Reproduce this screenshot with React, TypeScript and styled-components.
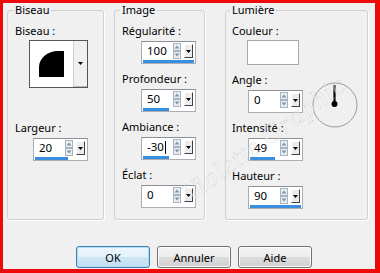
import React from "react";
import styled, { createGlobalStyle } from "styled-components";

const GlobalStyle = createGlobalStyle`
  html, body {
    margin: 0;
    padding: 0;
    background: #f0f0f0;
  }
  body {
    font-family: "Noto Sans", "Liberation Sans", sans-serif;
    font-size: 11px;
    color: #000;
  }
`;

const Window = styled.div`
  position: relative;
  width: 380px;
  height: 273px;
  box-sizing: border-box;
  border-style: solid;
  border-color: #ee0a0a;
  border-width: 3px 5px 4px 3px;
  background: #f0f0f0;
  overflow: hidden;
`;

const Groups = styled.div`
  display: flex;
  align-items: flex-start;
  padding-left: 4px;
`;

const Group = styled.fieldset<{ $w: number; $ml?: number; $pl: number }>`
  box-sizing: border-box;
  width: ${(p) => p.$w}px;
  height: 217px;
  min-width: 0;
  margin: 0 0 0 ${(p) => p.$ml ?? 0}px;
  padding: 7px 0 0 ${(p) => p.$pl}px;
  border: 1px solid #d0d0d0;
  border-radius: 3px;
  box-shadow: 1px 1px 0 #ffffff;
`;

const Legend = styled.legend`
  padding: 0 2px;
  margin-left: -2px;
  line-height: 14px;
`;

const Stack = styled.div`
  display: flex;
  flex-direction: column;
  gap: 8px;
`;

const Field = styled.div`
  display: flex;
  flex-direction: column;
  align-items: flex-start;
`;

const Label = styled.div`
  line-height: 14px;
  white-space: nowrap;
`;

const BevelPicker = styled.div`
  display: flex;
  width: 59px;
  height: 48px;
  margin: 2px 0 33px 14px;
  box-sizing: border-box;
  border: 1px solid #555;
  background: #fff;
`;

const BevelArt = styled.div`
  width: 43px;
  height: 46px;
`;

const PickerButton = styled.div`
  flex: 1;
  display: flex;
  align-items: center;
  justify-content: center;
  background: #f0f0f0;
  border-left: 1px solid #d0d0d0;
  border-bottom: 1px solid #b8b8b8;
`;

const SpinBox = styled.div<{ $indent: number }>`
  display: flex;
  flex-direction: column;
  width: 55px;
  height: 23px;
  margin: 3px 0 0 ${(p) => p.$indent}px;
  box-sizing: border-box;
  border: 1px solid #abadb3;
  border-top-color: #8f9095;
  background: #fff;
`;

const SpinRow = styled.div`
  display: flex;
  align-items: center;
  height: 18px;
`;

const Value = styled.span`
  flex: 1;
  display: flex;
  align-items: center;
  padding-left: 5px;
  font-size: 11.5px;
  line-height: 18px;
`;

const Caret = styled.span`
  display: inline-block;
  width: 1px;
  height: 13px;
  margin-left: 1px;
  background: #000;
`;

const DropButton = styled.div`
  display: flex;
  align-items: center;
  justify-content: center;
  width: 9px;
  height: 14px;
  margin: 0 2px 0 3px;
  box-sizing: border-box;
  border: 1px solid;
  border-color: #ffffff #404040 #404040 #ffffff;
  background: #ececec;
`;

const Bar = styled.div`
  height: 3px;
  margin-left: 1px;
  background: #3b8de0;
`;

const Swatch = styled.div`
  width: 52px;
  height: 25px;
  margin: 2px 0 0 15px;
  box-sizing: border-box;
  border: 1px solid #a8a8a8;
  background: #fff;
`;

const AngleRow = styled.div`
  display: flex;
  align-items: flex-start;
  height: 40px;
`;

const Dial = styled.svg`
  flex: none;
  margin: 9px 0 0 9px;
`;

const Buttons = styled.div`
  display: flex;
  gap: 7px;
  margin-top: 26px;
  padding-left: 73px;
`;

const Button = styled.button<{ $default?: boolean }>`
  width: 74px;
  height: 22px;
  box-sizing: border-box;
  padding: 0;
  font: inherit;
  color: #000;
  border: 1px solid ${(p) => (p.$default ? "#3c7fb1" : "#707070")};
  border-radius: 3px;
  background: ${(p) =>
    p.$default
      ? "linear-gradient(#eef7fc 0%, #e2f1fa 50%, #cfe7f5 50%, #c0dff1 100%)"
      : "linear-gradient(#f4f4f4 0%, #ececec 50%, #dddddd 50%, #d0d0d0 100%)"};
  box-shadow: inset 0 0 0 1px ${(p) => (p.$default ? "#b5dcf3" : "#fbfbfb")};
`;

const Watermark = styled.div`
  position: absolute;
  left: 182px;
  top: 178px;
  transform: rotate(-36deg);
  transform-origin: left center;
  font-family: "Liberation Serif", serif;
  font-style: italic;
  font-size: 27px;
  letter-spacing: 1px;
  color: rgba(255, 255, 255, 0.45);
  -webkit-text-stroke: 0.5px rgba(140, 140, 140, 0.32);
  white-space: nowrap;
  pointer-events: none;
`;

const DownTriangle = () => (
  <svg width="5" height="3" viewBox="0 0 5 3">
    <path d="M0 0 H5 L2.5 3 Z" fill="#000" />
  </svg>
);

const SpinArrows = () => (
  <svg width="8" height="16" viewBox="0 0 8 16">
    <rect x="0.5" y="0.5" width="7" height="7" fill="#e8edf2" stroke="#a9b4bf" />
    <rect x="0.5" y="8.5" width="7" height="7" fill="#e8edf2" stroke="#a9b4bf" />
    <path d="M4 2.5 L6.5 5.5 H1.5 Z" fill="#7b95b0" />
    <path d="M1.5 10.5 H6.5 L4 13.5 Z" fill="#7b95b0" />
  </svg>
);

type SpinnerProps = { value: string; bar: number; indent: number; caret?: boolean };

const Spinner = ({ value, bar, indent, caret }: SpinnerProps) => (
  <SpinBox $indent={indent}>
    <SpinRow>
      <Value>
        {value}
        {caret && <Caret />}
      </Value>
      <SpinArrows />
      <DropButton>
        <DownTriangle />
      </DropButton>
    </SpinRow>
    <Bar style={{ width: bar }} />
  </SpinBox>
);

const App = () => {
  return (
    <>
      <GlobalStyle />
      <Window>
        <Groups>
          <Group $w={97} $pl={7}>
            <Legend>Biseau</Legend>
            <Label>Biseau :</Label>
            <BevelPicker>
              <BevelArt>
                <svg width="43" height="46" viewBox="0 0 43 46">
                  <path d="M9 36 V26 A19 16 0 0 1 28 10 H34 V36 Z" fill="#000" />
                </svg>
              </BevelArt>
              <PickerButton>
                <DownTriangle />
              </PickerButton>
            </BevelPicker>
            <Field>
              <Label>Largeur :</Label>
              <Spinner value="20" bar={33} indent={18} />
            </Field>
          </Group>

          <Group $w={91} $ml={10} $pl={7}>
            <Legend>Image</Legend>
            <Stack>
              <Field>
                <Label>Régularité :</Label>
                <Spinner value="100" bar={51} indent={19} />
              </Field>
              <Field>
                <Label>Profondeur :</Label>
                <Spinner value="50" bar={26} indent={19} />
              </Field>
              <Field>
                <Label>Ambiance :</Label>
                <Spinner value="-30" bar={26} indent={19} caret />
              </Field>
              <Field>
                <Label>Éclat :</Label>
                <Spinner value="0" bar={0} indent={19} />
              </Field>
            </Stack>
          </Group>

          <Group $w={143} $ml={20} $pl={6}>
            <Legend>Lumière</Legend>
            <Stack>
              <Field>
                <Label>Couleur :</Label>
                <Swatch />
              </Field>
              <AngleRow>
                <Field>
                  <Label>Angle :</Label>
                  <Spinner value="0" bar={0} indent={16} />
                </Field>
                <Dial width="46" height="46" viewBox="0 0 46 46">
                  <circle cx="23" cy="23" r="22" fill="none" stroke="#9a9a9a" strokeWidth="1" />
                  <line x1="22.5" y1="3" x2="22.5" y2="22" stroke="#000" strokeWidth="2.2" />
                  <circle cx="22.5" cy="22" r="3" fill="#000" />
                </Dial>
              </AngleRow>
              <Field>
                <Label>Intensité :</Label>
                <Spinner value="49" bar={25} indent={16} />
              </Field>
              <Field>
                <Label>Hauteur :</Label>
                <Spinner value="90" bar={51} indent={16} />
              </Field>
            </Stack>
          </Group>
        </Groups>

        <Buttons>
          <Button $default>OK</Button>
          <Button>Annuler</Button>
          <Button>Aide</Button>
        </Buttons>

        <Watermark>Violette Graphic</Watermark>
      </Window>
    </>
  );
};

export default App;
